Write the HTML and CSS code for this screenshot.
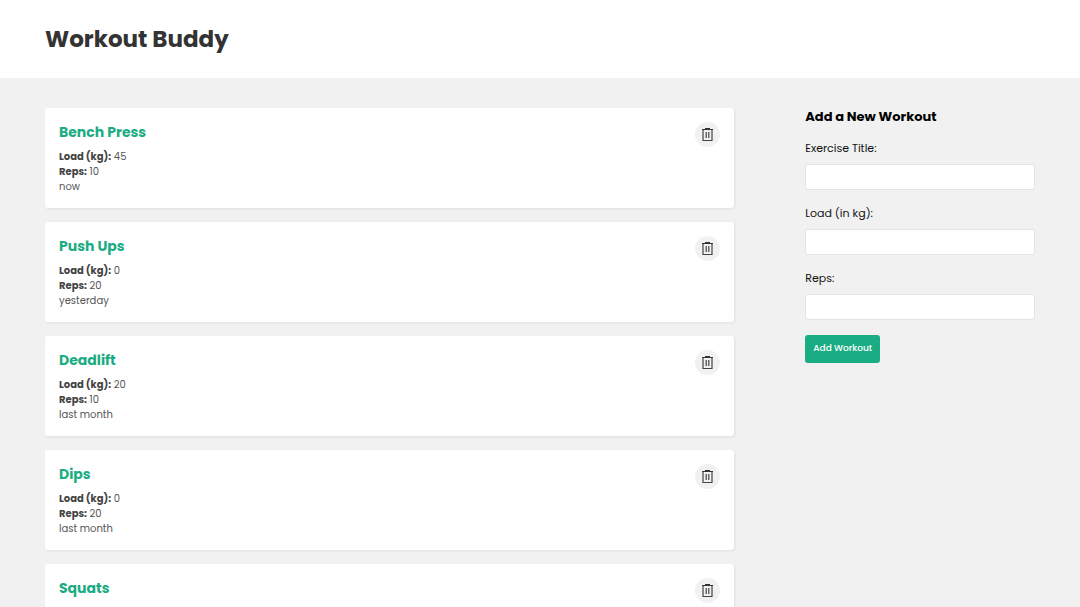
FILE: index.html
```html
<!DOCTYPE html>
<html lang="en">
<head>
<meta charset="utf-8">
<title>Workout Buddy</title>
<link rel="stylesheet" href="styles.css">
</head>
<body>
<svg class="sprite" aria-hidden="true">
  <symbol id="trash" viewBox="0 0 13 13">
    <path d="M1 1.500h11M4 .5h5" fill="none" stroke="#333" stroke-width="1"/>
    <path d="M2 1.500v11h9v-11M5.200 4v6M7.800 4v6" fill="none" stroke="#444" stroke-width="1.2"/>
  </symbol>
</svg>
<header class="site-header">
  <div class="container"><h1 class="brand">Workout Buddy</h1></div>
</header>
<main class="page">
  <section class="workouts">
    <article class="card">
      <h2 class="card-title">Bench Press</h2>
      <p><strong>Load (kg):</strong> 45</p>
      <p><strong>Reps:</strong> 10</p>
      <p>now</p>
      <button class="delete" type="button" aria-label="Delete Bench Press"><svg><use href="#trash"/></svg></button>
    </article>
    <article class="card">
      <h2 class="card-title">Push Ups</h2>
      <p><strong>Load (kg):</strong> 0</p>
      <p><strong>Reps:</strong> 20</p>
      <p>yesterday</p>
      <button class="delete" type="button" aria-label="Delete Push Ups"><svg><use href="#trash"/></svg></button>
    </article>
    <article class="card">
      <h2 class="card-title">Deadlift</h2>
      <p><strong>Load (kg):</strong> 20</p>
      <p><strong>Reps:</strong> 10</p>
      <p>last month</p>
      <button class="delete" type="button" aria-label="Delete Deadlift"><svg><use href="#trash"/></svg></button>
    </article>
    <article class="card">
      <h2 class="card-title">Dips</h2>
      <p><strong>Load (kg):</strong> 0</p>
      <p><strong>Reps:</strong> 20</p>
      <p>last month</p>
      <button class="delete" type="button" aria-label="Delete Dips"><svg><use href="#trash"/></svg></button>
    </article>
    <article class="card">
      <h2 class="card-title">Squats</h2>
      <button class="delete" type="button" aria-label="Delete Squats"><svg><use href="#trash"/></svg></button>
    </article>
  </section>
  <form class="create">
    <h2 class="form-title">Add a New Workout</h2>
    <label for="title">Exercise Title:</label>
    <input id="title" type="text">
    <label for="load">Load (in kg):</label>
    <input id="load" type="number">
    <label for="reps">Reps:</label>
    <input id="reps" type="number">
    <button class="submit" type="button">Add Workout</button>
  </form>
</main>
</body>
</html>
```
FILE: styles.css
```css
* { box-sizing: border-box; }
html { height: 100%; overflow: hidden; }
body {
  margin: 0;
  height: 100%;
  overflow: hidden;
  background: #f1f1f1;
  color: #111;
  font-family: Poppins, Inter, sans-serif;
}
h1, h2, p { margin: 0; }
.sprite { position: absolute; width: 0; height: 0; }
.site-header { background: #fff; }
.container { padding: 21px 45px; }
.brand { font-size: 23px; line-height: 36px; font-weight: 700; color: #333; }
.page {
  display: grid;
  grid-template-columns: 3fr 1fr;
  gap: 71px;
  padding: 30px 45px;
}
.card {
  position: relative;
  min-height: 100px;
  margin-bottom: 14px;
  padding: 14px;
  background: #fff;
  border-radius: 3px;
  box-shadow: 1px 1px 3px rgba(0, 0, 0, 0.07);
}
.card-title { margin-bottom: 7px; font-size: 14px; line-height: 20px; font-weight: 700; color: #1aac83; }
.card p { font-size: 10px; line-height: 15px; color: #555; }
.card strong { font-weight: 700; color: #444; }
.delete {
  position: absolute;
  top: 14px;
  right: 14px;
  display: grid;
  place-items: center;
  width: 25px;
  height: 25px;
  padding: 0;
  border: 0;
  border-radius: 50%;
  background: #f1f1f1;
}
.delete svg { width: 13px; height: 13px; }
.form-title { margin-bottom: 12px; font-size: 13px; line-height: 18px; font-weight: 700; color: #000; }
.create label { display: block; font-size: 11px; line-height: 20px; }
.create input {
  display: block;
  width: 100%;
  height: 26px;
  margin: 6px 0 13px;
  padding: 6px;
  border: 1px solid #e4e4e4;
  border-radius: 3px;
  background: #fff;
}
.submit {
  height: 28px;
  padding: 0 8px;
  border: 0;
  border-radius: 3px;
  background: #1aac83;
  color: #fff;
  font: 500 9px/15px Poppins, Inter, sans-serif;
}
```
